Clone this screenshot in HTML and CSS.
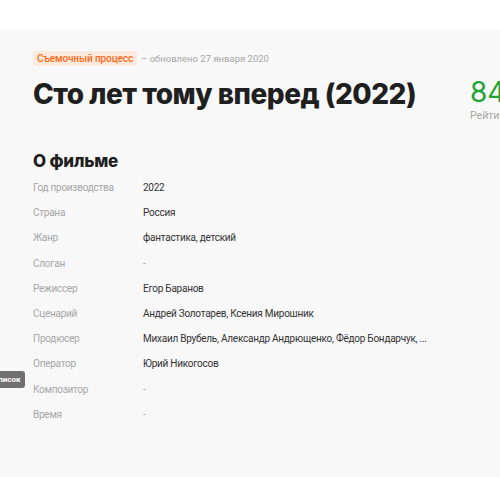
FILE: index.html
```html
<!DOCTYPE html>
<html lang="ru">
<head>
    <meta charset="UTF-8">
    <meta name="viewport" content="width=device-width, initial-scale=1.0">
    <title>Сто лет тому вперед (2022)</title>
    <link rel="stylesheet" href="styles.css">
</head>
<body>
    <div class="topbar"></div>

    <main class="film">
        <div class="film-head">
            <div class="film-title-block">
                <div class="status-line">
                    <span class="badge">Съемочный процесс</span>
                    <span class="updated">– обновлено 27 января 2020</span>
                </div>
                <h1 class="film-title">Сто лет тому вперед (2022)</h1>
            </div>
            <div class="rating">
                <div class="rating-value">84%</div>
                <div class="rating-label">Рейтинг</div>
            </div>
        </div>

        <section class="about">
            <h2>О фильме</h2>
            <dl class="info">
                <div class="info-row"><dt>Год производства</dt><dd>2022</dd></div>
                <div class="info-row"><dt>Страна</dt><dd>Россия</dd></div>
                <div class="info-row"><dt>Жанр</dt><dd>фантастика, детский</dd></div>
                <div class="info-row"><dt>Слоган</dt><dd class="empty">-</dd></div>
                <div class="info-row"><dt>Режиссер</dt><dd>Егор Баранов</dd></div>
                <div class="info-row"><dt>Сценарий</dt><dd>Андрей Золотарев, Ксения Мирошник</dd></div>
                <div class="info-row"><dt>Продюсер</dt><dd>Михаил Врубель, Александр Андрющенко, Фёдор Бондарчук, ...</dd></div>
                <div class="info-row"><dt>Оператор</dt><dd>Юрий Никогосов</dd></div>
                <div class="info-row"><dt>Композитор</dt><dd class="empty">-</dd></div>
                <div class="info-row"><dt>Время</dt><dd class="empty">-</dd></div>
            </dl>
        </section>
    </main>

    <button class="list-btn">Список</button>
</body>
</html>
```

FILE: styles.css
```css
:root {
    --bg-color: #f8f8f8;
    --text-color: #1f1f1f;
    --muted-color: #a6a6a6;
    --accent-color: #ff6a1a;
    --green-color: #22a336;
}

body {
    margin: 0;
    font-family: Roboto, "Noto Sans", sans-serif;
    background-color: var(--bg-color);
    color: var(--text-color);
    overflow: hidden;
    height: 477px;
}

.topbar {
    height: 30px;
    background: white;
}

.film {
    padding: 21px 0 0 33px;
}

.film-head {
    display: flex;
    width: 600px;
}

.film-title-block {
    flex: 0 0 437px;
}

.status-line {
    display: flex;
    align-items: center;
    gap: 4px;
    height: 15px;
}

.badge {
    background: #fdeadf;
    color: var(--accent-color);
    font-size: 10px;
    font-weight: 500;
    padding: 0 4px;
    line-height: 15px;
    border-radius: 2px;
    letter-spacing: -0.1px;
}

.updated {
    font-size: 9.5px;
    color: var(--muted-color);
}

.film-title {
    margin: 10px 0 0;
    font-family: Inter, sans-serif;
    font-size: 28px;
    font-weight: 800;
    line-height: 36px;
    letter-spacing: -0.5px;
}

.rating {
    padding-top: 25px;
}

.rating-value {
    font-family: Inter, sans-serif;
    color: var(--green-color);
    font-size: 28px;
    line-height: 32px;
}

.rating-label {
    font-size: 10.5px;
    color: var(--muted-color);
    margin-top: 1px;
}

.about h2 {
    margin: 28px 0 0;
    font-family: Inter, sans-serif;
    font-size: 17px;
    font-weight: 800;
    line-height: 22px;
    letter-spacing: -0.2px;
}

.info {
    margin: 3px 0 0;
}

.info-row {
    display: flex;
    height: 25.2px;
    align-items: center;
    font-size: 10px;
    letter-spacing: -0.25px;
}

.info dt {
    flex: 0 0 110px;
    color: var(--muted-color);
}

.info dd {
    margin: 0;
    color: #333;
}

.info dd.empty {
    color: var(--muted-color);
}

.list-btn {
    position: absolute;
    left: -12px;
    top: 371px;
    height: 17px;
    padding: 0 5px;
    border: none;
    border-radius: 3px;
    background: #707070;
    color: white;
    font-family: inherit;
    font-size: 8px;
    font-weight: 700;
}
```
